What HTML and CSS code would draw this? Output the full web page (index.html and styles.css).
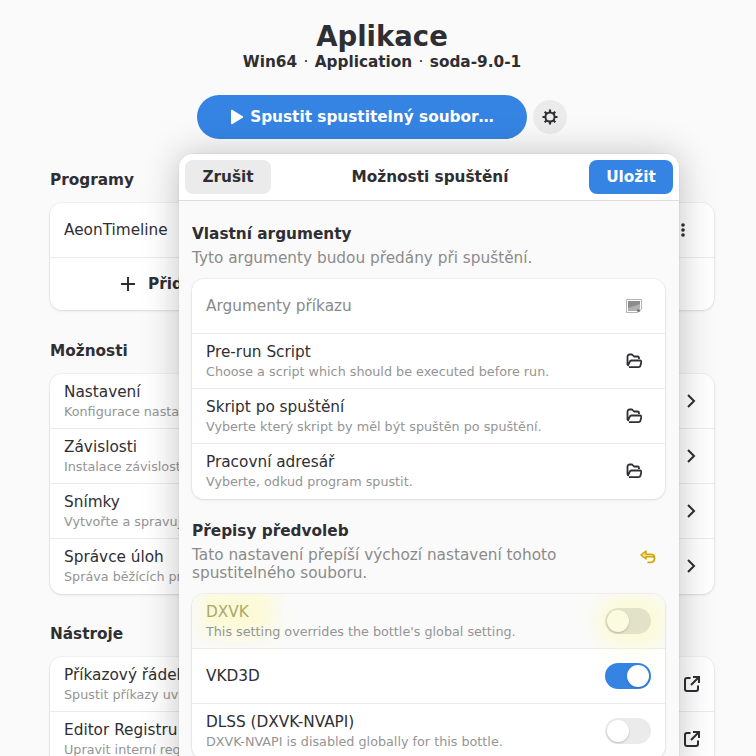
FILE: index.html
```html
<!DOCTYPE html>
<html lang="en">
  <head>
    <title>Aplikace</title>
    <link rel="stylesheet" href="styles.css">
  </head>
  <body>
    <!-- PAGE BEHIND THE DIALOG -->
    <div id="page">
      <h1>Aplikace</h1>
      <p class="subtitle">Win64 <span class="dot">·</span> Application <span class="dot">·</span> soda-9.0-1</p>
      <div class="run">
        <button class="run-btn">
          <svg class="play" viewBox="0 0 14 16"><path fill="currentColor" d="M1 1.500c0-.6.6-1 1.100-.7l10.600 6.500c.5.3.5 1.100 0 1.400L2.100 15.200c-.5.3-1.100-.1-1.100-.7z"/></svg>
          Spustit spustitelný soubor…
        </button>
        <button class="gear-btn">
          <svg viewBox="0 0 16 16"><circle cx="8" cy="8" r="4.600" fill="none" stroke="currentColor" stroke-width="2"/><path stroke="currentColor" stroke-width="2.200" d="M8 .5v3M8 12.500v3M.5 8h3M12.500 8h3M2.700 2.700l2.100 2.100M11.200 11.200l2.100 2.100M13.300 2.700l-2.100 2.100M4.800 11.200l-2.100 2.100"/></svg>
        </button>
      </div>

      <h2>Programy</h2>
      <div class="card card-programs">
        <div class="row">
          <div class="row-text"><span class="name">AeonTimeline</span></div>
          <svg class="ico dots" viewBox="0 0 4 16"><circle cx="2" cy="3" r="1.800" fill="currentColor"/><circle cx="2" cy="8" r="1.800" fill="currentColor"/><circle cx="2" cy="13" r="1.800" fill="currentColor"/></svg>
        </div>
        <div class="row row-add">
          <svg class="plus" viewBox="0 0 16 16"><path stroke="currentColor" stroke-width="2" d="M8 1v14M1 8h14"/></svg>
          <b>Přidat zástupce…</b>
        </div>
      </div>

      <h2>Možnosti</h2>
      <div class="card">
        <div class="row">
          <div class="row-text"><span class="name">Nastavení</span><span class="sub">Konfigurace nastavení lahve.</span></div>
          <svg class="ico chev" viewBox="0 0 10 16"><path fill="none" stroke="currentColor" stroke-width="2" d="M2 2l6 6-6 6"/></svg>
        </div>
        <div class="row">
          <div class="row-text"><span class="name">Závislosti</span><span class="sub">Instalace závislostí pro programy.</span></div>
          <svg class="ico chev" viewBox="0 0 10 16"><path fill="none" stroke="currentColor" stroke-width="2" d="M2 2l6 6-6 6"/></svg>
        </div>
        <div class="row">
          <div class="row-text"><span class="name">Snímky</span><span class="sub">Vytvořte a spravujte stavy lahve.</span></div>
          <svg class="ico chev" viewBox="0 0 10 16"><path fill="none" stroke="currentColor" stroke-width="2" d="M2 2l6 6-6 6"/></svg>
        </div>
        <div class="row">
          <div class="row-text"><span class="name">Správce úloh</span><span class="sub">Správa běžících programů.</span></div>
          <svg class="ico chev" viewBox="0 0 10 16"><path fill="none" stroke="currentColor" stroke-width="2" d="M2 2l6 6-6 6"/></svg>
        </div>
      </div>

      <h2 class="tools">Nástroje</h2>
      <div class="card">
        <div class="row">
          <div class="row-text"><span class="name">Příkazový řádek</span><span class="sub">Spustit příkazy uvnitř lahve.</span></div>
          <svg class="ico ext" viewBox="0 0 16 16"><path fill="none" stroke="currentColor" stroke-width="2" d="M6.500 2H3a2 2 0 0 0-2 2v9a2 2 0 0 0 2 2h9a2 2 0 0 0 2-2V9.500M9 1h6v6M15 1L7 9"/></svg>
        </div>
        <div class="row">
          <div class="row-text"><span class="name">Editor Registru</span><span class="sub">Upravit interní registr.</span></div>
          <svg class="ico ext" viewBox="0 0 16 16"><path fill="none" stroke="currentColor" stroke-width="2" d="M6.500 2H3a2 2 0 0 0-2 2v9a2 2 0 0 0 2 2h9a2 2 0 0 0 2-2V9.500M9 1h6v6M15 1L7 9"/></svg>
        </div>
      </div>
    </div>

    <!-- DIALOG -->
    <div id="dialog">
      <div class="dialog-head">
        <button class="btn">Zrušit</button>
        <span class="dialog-title">Možnosti spuštění</span>
        <button class="btn btn-blue">Uložit</button>
      </div>
      <div class="dialog-body">
        <h3>Vlastní argumenty</h3>
        <p class="desc">Tyto argumenty budou předány při spuštění.</p>
        <div class="card">
          <div class="row">
            <div class="row-text"><span class="placeholder">Argumenty příkazu</span></div>
            <svg class="ico16" viewBox="0 0 16 16"><path fill="#fff" stroke="#b4b4b4" d="M.5 1.500h15v9.500l-3.500 3.500H.5z"/><path fill="#8c8c8c" d="M2 3h12v7l-3 3H2z"/><path fill="#b0b0b0" d="M2 10l12-4v4l-3 3H2z"/><circle cx="12.500" cy="12.500" r="1.600" fill="#777"/></svg>
          </div>
          <div class="row">
            <div class="row-text"><span class="name">Pre-run Script</span><span class="sub">Choose a script which should be executed before run.</span></div>
            <svg class="ico16" viewBox="0 0 16 16"><path fill="none" stroke="#2e2e33" stroke-width="1.800" stroke-linejoin="round" d="M1.500 12V3.500a2 2 0 0 1 2-2h2.600l1.900 2h3.500a1.500 1.500 0 0 1 1.500 1.500v1M3 14.200h9.500a2 2 0 0 0 1.900-1.500l.9-3.500c.2-.8-.4-1.700-1.200-1.700H5.300c-.7 0-1.300.5-1.500 1.100L1.700 13"/></svg>
          </div>
          <div class="row">
            <div class="row-text"><span class="name">Skript po spuštění</span><span class="sub">Vyberte který skript by měl být spuštěn po spuštění.</span></div>
            <svg class="ico16" viewBox="0 0 16 16"><path fill="none" stroke="#2e2e33" stroke-width="1.800" stroke-linejoin="round" d="M1.500 12V3.500a2 2 0 0 1 2-2h2.600l1.900 2h3.500a1.500 1.500 0 0 1 1.500 1.500v1M3 14.200h9.500a2 2 0 0 0 1.900-1.500l.9-3.500c.2-.8-.4-1.700-1.200-1.700H5.300c-.7 0-1.300.5-1.500 1.100L1.700 13"/></svg>
          </div>
          <div class="row">
            <div class="row-text"><span class="name">Pracovní adresář</span><span class="sub">Vyberte, odkud program spustit.</span></div>
            <svg class="ico16" viewBox="0 0 16 16"><path fill="none" stroke="#2e2e33" stroke-width="1.800" stroke-linejoin="round" d="M1.500 12V3.500a2 2 0 0 1 2-2h2.600l1.900 2h3.500a1.500 1.500 0 0 1 1.500 1.500v1M3 14.200h9.500a2 2 0 0 0 1.900-1.500l.9-3.500c.2-.8-.4-1.700-1.200-1.700H5.300c-.7 0-1.300.5-1.500 1.100L1.700 13"/></svg>
          </div>
        </div>

        <h3 class="second">Přepisy předvoleb</h3>
        <div class="desc-row">
          <p class="desc">Tato nastavení přepíší výchozí nastavení tohoto spustitelného souboru.</p>
          <svg class="reset" viewBox="0 0 16 14"><path fill="#f6e27a" stroke="#d3a50c" stroke-width="1.500" stroke-linejoin="round" d="M6 1L1 5l5 4V6.800h5.500c1.900 0 3 .5 3 1.500v-1c0-2-1.300-3-3.500-3H6z"/><path fill="none" stroke="#d3a50c" stroke-width="1.800" d="M14.500 8.300c0 2.500-1.300 4-3.500 4H7.500"/></svg>
        </div>
        <div class="card">
          <div class="row row-glow">
            <div class="row-text"><span class="name glow-name">DXVK</span><span class="sub">This setting overrides the bottle's global setting.</span></div>
            <span class="toggle toggle-glow"><span class="knob"></span></span>
          </div>
          <div class="row">
            <div class="row-text"><span class="name">VKD3D</span></div>
            <span class="toggle on"><span class="knob"></span></span>
          </div>
          <div class="row">
            <div class="row-text"><span class="name">DLSS (DXVK-NVAPI)</span><span class="sub">DXVK-NVAPI is disabled globally for this bottle.</span></div>
            <span class="toggle"><span class="knob"></span></span>
          </div>
        </div>
      </div>
    </div>
  </body>
</html>
```

FILE: styles.css
```css
html, body {
  height: 756px;
  overflow: hidden;
}
body {
  font-family: "DejaVu Sans", sans-serif;
  font-size: 15.300px;
  color: #2e2e33;
  background: #fafafa;
  margin: 0;
  position: relative;
}
#page {
  padding: 19px 42px 0 50px;
}
h1 {
  font-size: 27.500px;
  line-height: 34px;
  font-weight: 700;
  text-align: center;
  margin: 0;
}
.subtitle {
  font-size: 15.300px;
  line-height: 18px;
  font-weight: 700;
  text-align: center;
  margin: 0;
}
.dot {
  font-weight: 400;
  margin: 0 1px;
}
.run {
  display: flex;
  align-items: center;
  justify-content: center;
  gap: 6px;
  margin-top: 24px;
}
button {
  font-family: inherit;
  font-weight: 700;
  border: 0;
  color: inherit;
}
.run-btn {
  width: 330px;
  height: 44px;
  border-radius: 22px;
  background: #3584e4;
  color: #fff;
  font-size: 15.300px;
  display: flex;
  align-items: center;
  justify-content: center;
  gap: 6px;
  padding: 0;
}
.play {
  width: 14px;
  height: 16px;
}
.gear-btn {
  width: 34px;
  height: 34px;
  border-radius: 50%;
  background: #ebebeb;
  padding: 9px;
}
.gear-btn svg {
  display: block;
  width: 16px;
  height: 16px;
}
h2 {
  font-size: 15.300px;
  line-height: 18px;
  font-weight: 700;
  margin: 32px 0 14px;
}
h2.tools {
  margin-top: 31px;
}
.card {
  background: #fff;
  border-radius: 12px;
  box-shadow: 0 0 0 1px rgba(0, 0, 0, .03), 0 1px 3px rgba(0, 0, 0, .1);
  overflow: hidden;
}
.row {
  display: flex;
  align-items: center;
  justify-content: space-between;
  height: 54px;
  padding: 0 14px;
  border-bottom: 1px solid #ebebeb;
}
.row:last-child {
  padding-bottom: 1px;
  border-bottom: 0;
}
.card-programs .row:last-child {
  height: 52px;
  padding-bottom: 0;
}
.row-text {
  display: flex;
  flex-direction: column;
}
.name {
  font-size: 15.300px;
  line-height: 20px;
}
.sub {
  font-size: 12.750px;
  line-height: 17px;
  margin-top: 1px;
  color: #949494;
}
.placeholder {
  color: #8a8a8a;
}
.row-add {
  justify-content: flex-start;
  padding-left: 70px;
  gap: 12px;
}
.plus {
  width: 16px;
  height: 16px;
}
.ico {
  flex: none;
}
.dots {
  width: 4px;
  height: 16px;
  margin-right: 15px;
}
.chev {
  width: 10px;
  height: 16px;
  margin-right: 4px;
}
.ext {
  width: 16px;
  height: 16px;
}

/* dialog */
#dialog {
  position: absolute;
  left: 179px;
  top: 154px;
  width: 500px;
  height: 620px;
  background: #fafafa;
  border-radius: 14px;
  box-shadow: 0 0 0 1px rgba(0, 0, 0, .03), 0 1px 36px rgba(0, 0, 0, .24);
  overflow: hidden;
}
.dialog-head {
  display: flex;
  align-items: center;
  justify-content: space-between;
  height: 46px;
  padding: 0 6px;
  background: #fff;
  border-bottom: 1px solid #dedede;
}
.btn {
  height: 34px;
  width: 86px;
  font-size: 15.300px;
  border-radius: 8px;
  background: #ebebeb;
  padding: 0;
}
.btn-blue {
  width: 84px;
  background: #3584e4;
  color: #fff;
}
.dialog-title {
  font-size: 15.300px;
  font-weight: 700;
}
.dialog-body {
  padding: 24px 14px 0 13px;
}
h3 {
  font-size: 15.300px;
  line-height: 18px;
  font-weight: 700;
  margin: 0;
}
h3.second {
  margin-top: 23px;
}
.desc {
  font-size: 15.300px;
  line-height: 18px;
  color: #8b8b8b;
  margin: 6px 0 12px;
}
.desc-row {
  display: flex;
  align-items: flex-start;
  justify-content: space-between;
}
.desc-row .desc {
  width: 400px;
}
.ico16 {
  width: 16px;
  height: 16px;
  flex: none;
  margin-right: 9px;
}
.reset {
  width: 16px;
  height: 14px;
  margin: 10px 9px 0 0;
}
.row-glow {
  background: #fafafa;
}
.glow-name {
  color: #a9a96b;
  background: rgba(255, 250, 170, .45);
  box-shadow: 10px 0 20px 14px rgba(255, 250, 170, .45);
  align-self: flex-start;
}
.toggle {
  flex: none;
  width: 46px;
  height: 26px;
  border-radius: 13px;
  background: #ebebeb;
  padding: 2px;
  box-sizing: border-box;
  display: flex;
}
.knob {
  width: 22px;
  height: 22px;
  border-radius: 50%;
  background: #fff;
  box-shadow: 0 1px 2px rgba(0, 0, 0, .2);
}
.toggle.on {
  background: #3584e4;
  justify-content: flex-end;
}
.toggle-glow {
  background: #e2e2c8;
  box-shadow: 4px 0 20px 12px rgba(255, 250, 170, .45);
}
.toggle-glow .knob {
  background: #fbfbe0;
}
```
